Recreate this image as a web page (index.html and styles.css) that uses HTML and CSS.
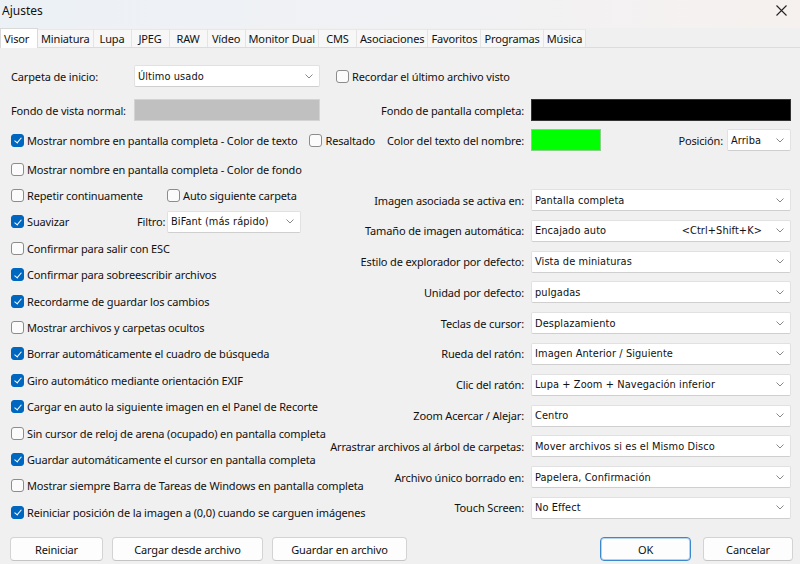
FILE: index.html
```html
<!DOCTYPE html>
<html lang="es">
<head>
    <meta charset="UTF-8" />
    <title>Ajustes</title>
    <link rel="stylesheet" href="styles.css">
</head>
<body>
<div class="window">
    <header class="titlebar">
        <span class="title">Ajustes</span>
        <svg class="close" width="11" height="11" viewBox="0 0 11 11"><path d="M0.5 0.5L10.5 10.5M10.5 0.5L0.5 10.5" stroke="#222" stroke-width="1.1" fill="none"/></svg>
    </header>

    <nav class="tabs">
        <span class="tab active">Visor</span>
        <span class="tab">Miniatura</span>
        <span class="tab">Lupa</span>
        <span class="tab">JPEG</span>
        <span class="tab">RAW</span>
        <span class="tab">Vídeo</span>
        <span class="tab">Monitor Dual</span>
        <span class="tab">CMS</span>
        <span class="tab">Asociaciones</span>
        <span class="tab">Favoritos</span>
        <span class="tab">Programas</span>
        <span class="tab">Música</span>
    </nav>

    <section class="panel">
        <div class="top-grid">
            <span class="lbl">Carpeta de inicio:</span>
            <div class="combo"><span>Último usado</span><svg class="chev" width="8" height="5" viewBox="0 0 8 5"><path d="M0.5 0.5L4 4L7.5 0.5" fill="none" stroke="#888"/></svg></div>
            <label class="check span-2 recordar"><span class="box"></span>Recordar el último archivo visto</label>

            <span class="lbl">Fondo de vista normal:</span>
            <div class="swatch gray"></div>
            <span class="lbl right">Fondo de pantalla completa:</span>
            <div class="swatch black"></div>
        </div>

        <div class="name-row">
            <div class="name-left">
                <label class="check"><span class="box on"></span>Mostrar nombre en pantalla completa - Color de texto</label>
                <label class="check"><span class="box"></span>Resaltado</label>
                <span class="lbl push">Color del texto del nombre:</span>
            </div>
            <div class="name-right">
                <div class="swatch green"></div>
                <span class="lbl push">Posición:</span>
                <div class="combo small"><span>Arriba</span><svg class="chev" width="8" height="5" viewBox="0 0 8 5"><path d="M0.5 0.5L4 4L7.5 0.5" fill="none" stroke="#888"/></svg></div>
            </div>
        </div>

        <div class="lower">
            <div class="checks">
                <label class="check"><span class="box"></span>Mostrar nombre en pantalla completa - Color de fondo</label>
                <div class="pair">
                    <label class="check w-repeat"><span class="box"></span>Repetir continuamente</label>
                    <label class="check"><span class="box"></span>Auto siguiente carpeta</label>
                </div>
                <div class="pair">
                    <label class="check w-smooth"><span class="box on"></span>Suavizar</label>
                    <span class="lbl filtro">Filtro:</span>
                    <div class="combo filter"><span>BiFant (más rápido)</span><svg class="chev" width="8" height="5" viewBox="0 0 8 5"><path d="M0.5 0.5L4 4L7.5 0.5" fill="none" stroke="#888"/></svg></div>
                </div>
                <label class="check"><span class="box"></span>Confirmar para salir con ESC</label>
                <label class="check"><span class="box on"></span>Confirmar para sobreescribir archivos</label>
                <label class="check"><span class="box on"></span>Recordarme de guardar los cambios</label>
                <label class="check"><span class="box"></span>Mostrar archivos y carpetas ocultos</label>
                <label class="check"><span class="box on"></span>Borrar automáticamente el cuadro de búsqueda</label>
                <label class="check"><span class="box on"></span>Giro automático mediante orientación EXIF</label>
                <label class="check"><span class="box on"></span>Cargar en auto la siguiente imagen en el Panel de Recorte</label>
                <label class="check"><span class="box"></span>Sin cursor de reloj de arena (ocupado) en pantalla completa</label>
                <label class="check"><span class="box on"></span>Guardar automáticamente el cursor en pantalla completa</label>
                <label class="check"><span class="box"></span>Mostrar siempre Barra de Tareas de Windows en pantalla completa</label>
                <label class="check"><span class="box on"></span>Reiniciar posición de la imagen a (0,0) cuando se carguen imágenes</label>
            </div>

            <div class="options">
                <div class="opt"><span class="lbl">Imagen asociada se activa en:</span><div class="combo wide"><span>Pantalla completa</span><svg class="chev" width="8" height="5" viewBox="0 0 8 5"><path d="M0.5 0.5L4 4L7.5 0.5" fill="none" stroke="#888"/></svg></div></div>
                <div class="opt"><span class="lbl">Tamaño de imagen automática:</span><div class="combo wide"><span>Encajado auto</span><span class="hotkey">&lt;Ctrl+Shift+K&gt;</span><svg class="chev" width="8" height="5" viewBox="0 0 8 5"><path d="M0.5 0.5L4 4L7.5 0.5" fill="none" stroke="#888"/></svg></div></div>
                <div class="opt"><span class="lbl">Estilo de explorador por defecto:</span><div class="combo wide"><span>Vista de miniaturas</span><svg class="chev" width="8" height="5" viewBox="0 0 8 5"><path d="M0.5 0.5L4 4L7.5 0.5" fill="none" stroke="#888"/></svg></div></div>
                <div class="opt"><span class="lbl">Unidad por defecto:</span><div class="combo wide"><span>pulgadas</span><svg class="chev" width="8" height="5" viewBox="0 0 8 5"><path d="M0.5 0.5L4 4L7.5 0.5" fill="none" stroke="#888"/></svg></div></div>
                <div class="opt"><span class="lbl">Teclas de cursor:</span><div class="combo wide"><span>Desplazamiento</span><svg class="chev" width="8" height="5" viewBox="0 0 8 5"><path d="M0.5 0.5L4 4L7.5 0.5" fill="none" stroke="#888"/></svg></div></div>
                <div class="opt"><span class="lbl">Rueda del ratón:</span><div class="combo wide"><span>Imagen Anterior / Siguiente</span><svg class="chev" width="8" height="5" viewBox="0 0 8 5"><path d="M0.5 0.5L4 4L7.5 0.5" fill="none" stroke="#888"/></svg></div></div>
                <div class="opt"><span class="lbl">Clic del ratón:</span><div class="combo wide"><span>Lupa + Zoom + Navegación inferior</span><svg class="chev" width="8" height="5" viewBox="0 0 8 5"><path d="M0.5 0.5L4 4L7.5 0.5" fill="none" stroke="#888"/></svg></div></div>
                <div class="opt"><span class="lbl">Zoom Acercar / Alejar:</span><div class="combo wide"><span>Centro</span><svg class="chev" width="8" height="5" viewBox="0 0 8 5"><path d="M0.5 0.5L4 4L7.5 0.5" fill="none" stroke="#888"/></svg></div></div>
                <div class="opt"><span class="lbl">Arrastrar archivos al árbol de carpetas:</span><div class="combo wide"><span>Mover archivos si es el Mismo Disco</span><svg class="chev" width="8" height="5" viewBox="0 0 8 5"><path d="M0.5 0.5L4 4L7.5 0.5" fill="none" stroke="#888"/></svg></div></div>
                <div class="opt"><span class="lbl">Archivo único borrado en:</span><div class="combo wide"><span>Papelera, Confirmación</span><svg class="chev" width="8" height="5" viewBox="0 0 8 5"><path d="M0.5 0.5L4 4L7.5 0.5" fill="none" stroke="#888"/></svg></div></div>
                <div class="opt"><span class="lbl">Touch Screen:</span><div class="combo wide"><span>No Effect</span><svg class="chev" width="8" height="5" viewBox="0 0 8 5"><path d="M0.5 0.5L4 4L7.5 0.5" fill="none" stroke="#888"/></svg></div></div>
            </div>
        </div>
    </section>

    <footer class="buttons">
        <button class="btn w-reset">Reiniciar</button>
        <button class="btn w-load">Cargar desde archivo</button>
        <button class="btn w-save">Guardar en archivo</button>
        <button class="btn ok">OK</button>
        <button class="btn w-cancel">Cancelar</button>
    </footer>
</div>
</body>
</html>
```

FILE: styles.css
```css
* {
    box-sizing: border-box;
}
body {
    margin: 0;
    font-family: "Noto Sans", sans-serif;
    font-size: 11px;
    letter-spacing: -0.15px;
    color: #111;
    background: #f0f0f0;
}
.window {
    width: 800px;
    height: 564px;
    display: flex;
    flex-direction: column;
    overflow: hidden;
}
.titlebar {
    height: 28px;
    display: flex;
    align-items: center;
    justify-content: space-between;
    padding: 0 10px 8px 2px;
    background: linear-gradient(90deg, #ecf1f6 0%, #f1f2f4 55%, #f6f1ef 100%);
    font-size: 12px;
    letter-spacing: 0;
}
.close {
    margin-right: 3px;
}
.tabs {
    height: 20px;
    display: flex;
    align-items: stretch;
    background: #f0f0f0;
    border-bottom: 1px solid #dcdcdc;
}
.tab {
    min-width: 38px;
    display: flex;
    align-items: center;
    justify-content: center;
    padding: 0 3px;
    background: #f7f7f7;
    border-right: 1px solid #e4e4e4;
    border-top: 1px solid #e8e8e8;
    margin-top: 1px;
}
.tab.active {
    min-width: 38px;
    background: #fff;
    margin-top: 0;
    justify-content: flex-start;
    padding: 0 4px 0 3px;
    border: 1px solid #d9d9d9;
    border-bottom: none;
    margin-bottom: -1px;
}
.panel {
    flex: 1;
    padding: 17px 9px 0 11px;
    display: flex;
    flex-direction: column;
}
.lbl {
    white-space: nowrap;
}
.right {
    text-align: right;
    padding-right: 7px;
}
.top-grid {
    display: grid;
    grid-template-columns: 123px 186px minmax(0, 1fr) 260px;
    grid-auto-rows: 22px;
    row-gap: 12px;
    align-items: center;
}
.span-2 {
    grid-column: span 2;
}
.recordar {
    margin-left: 16px;
}
.swatch {
    height: 22px;
    border: 1px solid #d4d4d4;
}
.gray { background: #c0c0c0; }
.black { background: #000; border-color: #333; }
.green { background: #00ff00; border-color: #8ad08a; width: 70px; }

.combo {
    height: 22px;
    display: flex;
    align-items: center;
    padding: 0 6px 0 3px;
    background: #fff;
    border: 1px solid #e1e1e1;
    border-bottom-color: #cfcfcf;
    border-radius: 2px;
    font-family: "DejaVu Sans Condensed", "DejaVu Sans", sans-serif;
    font-stretch: condensed;
    font-size: 10.9px;
    letter-spacing: 0.1px;
    flex: none;
}
.combo span:first-child {
    flex: 1;
}
.hotkey {
    margin-right: 14px;
}
.chev {
    flex: none;
}
.combo.small { width: 64px; }
.combo.filter { width: 134px; }
.combo.wide { width: 260px; }

.check {
    display: flex;
    align-items: center;
    white-space: nowrap;
}
.box {
    width: 13px;
    height: 13px;
    margin-right: 3px;
    border: 1px solid #8c8c8c;
    border-radius: 3px;
    background: #fbfbfb;
    flex: none;
    position: relative;
}
.box.on {
    background: #0067c0;
    border-color: #0067c0;
}
.box.on::after {
    content: "";
    position: absolute;
    left: 3.5px;
    top: 1.5px;
    width: 3px;
    height: 6px;
    border: solid #fff;
    border-width: 0 1.1px 1.1px 0;
    transform: rotate(40deg);
}

.name-row {
    margin-top: 8px;
    height: 22px;
    display: flex;
    align-items: center;
}
.name-left {
    flex: 1;
    min-width: 0;
    display: flex;
    align-items: center;
    gap: 12px;
}
.name-left .push {
    margin-left: auto;
    margin-right: 7px;
}
.name-right {
    width: 260px;
    flex: none;
    display: flex;
    align-items: center;
}
.name-right .push {
    margin-left: auto;
    margin-right: 4px;
}

.lower {
    display: grid;
    grid-template-columns: 320px minmax(0, 1fr);
    margin-top: 5px;
}
.checks {
    display: grid;
    grid-auto-rows: 26.4px;
    align-items: center;
}
.pair {
    display: flex;
    align-items: center;
}
.w-repeat { width: 156px; }
.w-smooth { width: 126px; }
.filtro { width: 30px; }
.options {
    padding-top: 33px;
    display: flex;
    flex-direction: column;
    gap: 8.8px;
}
.opt {
    display: flex;
    align-items: center;
    justify-content: flex-end;
}
.opt .lbl {
    margin-right: 7px;
}

.buttons {
    height: 37px;
    display: flex;
    align-items: flex-start;
    padding: 10px 7px 0 10px;
    gap: 9px;
}
.btn {
    height: 24px;
    font-family: "Noto Sans", sans-serif;
    font-size: 11px;
    letter-spacing: -0.15px;
    color: #111;
    background: #fdfdfd;
    border: 1px solid #d3d3d3;
    border-bottom-color: #c4c4c4;
    border-radius: 4px;
    padding: 0;
}
.w-reset { width: 93px; }
.w-load { width: 151px; }
.w-save { width: 135px; }
.ok {
    width: 91px;
    margin-left: auto;
    margin-right: 3px;
    border-color: #3c88cc;
    box-shadow: inset 0 0 0 1px #b6d3ee;
}
.w-cancel { width: 90px; }
```
